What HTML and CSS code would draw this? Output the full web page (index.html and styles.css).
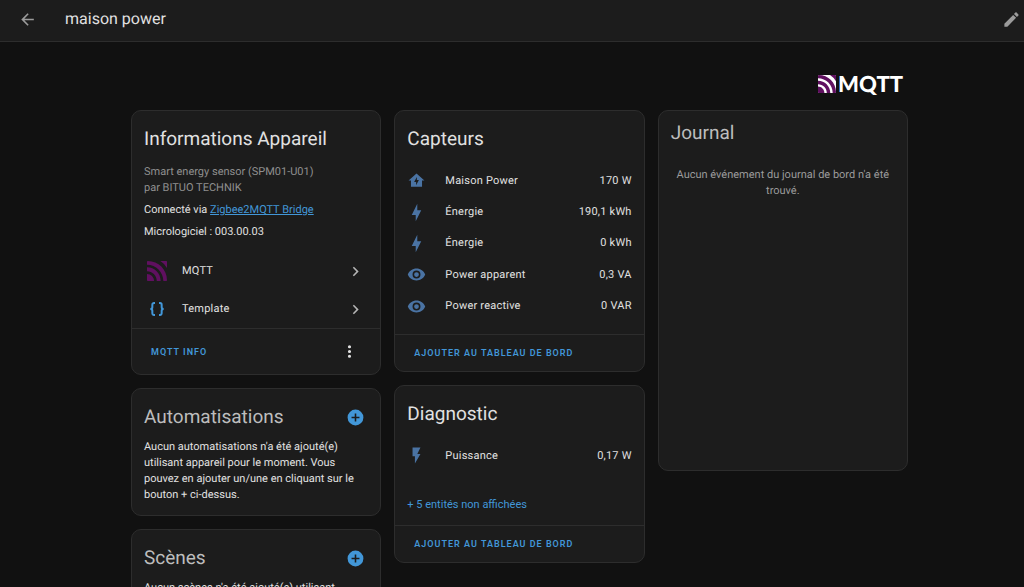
FILE: index.html
```html
<!DOCTYPE html>
<html lang="fr">
<head>
<meta charset="utf-8">
<meta name="viewport" content="width=device-width, initial-scale=1">
<title>maison power</title>
<link rel="stylesheet" href="styles.css">
</head>
<body class="app">
<svg class="sprite" aria-hidden="true">
  <symbol id="i-bolt" viewBox="0 0 24 24"><path d="M11 15H6L13 1V9H18L11 23V15Z"/></symbol>
  <symbol id="i-eye" viewBox="0 0 24 24"><path d="M12,9A3,3 0 0,0 9,12A3,3 0 0,0 12,15A3,3 0 0,0 15,12A3,3 0 0,0 12,9M12,17A5,5 0 0,1 7,12A5,5 0 0,1 12,7A5,5 0 0,1 17,12A5,5 0 0,1 12,17M12,4.5C7,4.5 2.73,7.61 1,12C2.73,16.39 7,19.5 12,19.5C17,19.5 21.27,16.39 23,12C21.27,7.61 17,4.5 12,4.5Z"/></symbol>
  <symbol id="i-chevron" viewBox="0 0 24 24"><path d="M8.59,16.58L13.17,12L8.59,7.41L10,6L16,12L10,18L8.59,16.58Z"/></symbol>
  <symbol id="i-plus" viewBox="0 0 24 24"><path d="M17,13H13V17H11V13H7V11H11V7H13V11H17M12,2A10,10 0 0,0 2,12A10,10 0 0,0 12,22A10,10 0 0,0 22,12A10,10 0 0,0 12,2Z"/></symbol>
  <symbol id="i-waves" viewBox="0 0 18 18"><path d="M0 11.6C3.500 11.600 6.400 14.500 6.400 18H0.700Q0 18 0 17.300ZM0 5.700C6.800 5.700 12.300 11.200 12.300 18H8.800C8.800 13.100 4.900 9.200 0 9.200ZM0 .7Q0 0 .7 0C10.300 0 18 7.700 18 17.300Q18 18 17.300 18H14.700C14.700 9.900 8.100 3.300 0 3.300ZM12 0H17.300Q18 0 18 .7V6.200Q15.600 2.300 12 0Z"/></symbol>
</svg>

<header class="topbar">
  <button class="icon-button" type="button" aria-label="Retour"><svg class="icon" viewBox="0 0 24 24"><path d="M20,11V13H8L13.500,18.500L12.080,19.920L4.160,12L12.080,4.080L13.500,5.500L8,11H20Z"/></svg></button>
  <h1 class="topbar-title">maison power</h1>
  <button class="icon-button" type="button" aria-label="Modifier"><svg class="icon" viewBox="0 0 24 24"><path d="M20.710,7.040C21.100,6.650 21.100,6 20.710,5.630L18.370,3.290C18,2.900 17.350,2.900 16.960,3.290L15.120,5.120L18.870,8.870M3,17.250V21H6.750L17.810,9.930L14.060,6.180L3,17.250Z"/></svg></button>
</header>

<main class="content">
  <div class="page">
    <div class="brand"><svg class="brand-mark" viewBox="0 0 18 18" aria-hidden="true"><rect class="brand-gaps" width="18" height="18" rx="1"/><use href="#i-waves"/></svg><span>MQTT</span></div>
    <div class="columns">
      <div class="column">
        <section class="card">
          <div class="card-body">
            <h2 class="card-title">Informations Appareil</h2>
            <div class="device">
              <p class="muted">Smart energy sensor (SPM01-U01)<br>par BITUO TECHNIK</p>
              <p>Connecté via <a class="link" href="#bridge">Zigbee2MQTT Bridge</a></p>
              <p>Micrologiciel : 003.00.03</p>
            </div>
          </div>
          <nav class="integrations">
            <a class="integration" href="#mqtt"><svg class="logo logo-mqtt" aria-hidden="true"><use href="#i-waves"/></svg><span class="grow">MQTT</span><svg class="icon"><use href="#i-chevron"/></svg></a>
            <a class="integration" href="#template"><svg class="logo logo-template" viewBox="0 0 24 24" aria-hidden="true"><path d="M9 3H7.500A2.500 2.500 0 0 0 5 5.500V9.500Q5 12 2 12Q5 12 5 14.500V18.500A2.500 2.500 0 0 0 7.500 21H9M15 3H16.500A2.500 2.500 0 0 1 19 5.500V9.500Q19 12 22 12Q19 12 19 14.500V18.500A2.500 2.500 0 0 1 16.500 21H15"/></svg><span class="grow">Template</span><svg class="icon"><use href="#i-chevron"/></svg></a>
          </nav>
          <footer class="card-actions card-actions-tall">
            <button class="action" type="button">MQTT INFO</button>
            <button class="icon-button menu" type="button" aria-label="Menu"><svg class="icon" viewBox="0 0 24 24"><path d="M12,16A2,2 0 0,1 14,18A2,2 0 0,1 12,20A2,2 0 0,1 10,18A2,2 0 0,1 12,16M12,10A2,2 0 0,1 14,12A2,2 0 0,1 12,14A2,2 0 0,1 10,12A2,2 0 0,1 12,10M12,4A2,2 0 0,1 14,6A2,2 0 0,1 12,8A2,2 0 0,1 10,6A2,2 0 0,1 12,4Z"/></svg></button>
          </footer>
        </section>
        <section class="card">
          <div class="card-body">
            <div class="card-head"><h2 class="card-title dim">Automatisations</h2><button class="icon-button add" type="button" aria-label="Ajouter une automatisation"><svg class="icon"><use href="#i-plus"/></svg></button></div>
            <p>Aucun automatisations n'a été ajouté(e) utilisant appareil pour le moment. Vous pouvez en ajouter un/une en cliquant sur le bouton + ci-dessus.</p>
          </div>
        </section>
        <section class="card">
          <div class="card-body">
            <div class="card-head"><h2 class="card-title dim">Scènes</h2><button class="icon-button add" type="button" aria-label="Ajouter une scène"><svg class="icon"><use href="#i-plus"/></svg></button></div>
            <p>Aucun scènes n'a été ajouté(e) utilisant appareil pour le moment. Vous pouvez en ajouter un/une en cliquant sur le bouton + ci-dessus.</p>
          </div>
        </section>
      </div>

      <div class="column">
        <section class="card">
          <div class="card-body">
            <h2 class="card-title">Capteurs</h2>
            <ul class="entities entities-five">
              <li class="entity"><svg class="icon" viewBox="0 0 24 24"><path fill-rule="evenodd" d="M12 3L2 12H5V20H19V12H22L12 3M11.500 18V14H9L12.500 7.500V11.500H15L11.500 18Z"/></svg><span class="grow">Maison Power</span><span>170 W</span></li>
              <li class="entity"><svg class="icon"><use href="#i-bolt"/></svg><span class="grow">Énergie</span><span>190,1 kWh</span></li>
              <li class="entity"><svg class="icon"><use href="#i-bolt"/></svg><span class="grow">Énergie</span><span>0 kWh</span></li>
              <li class="entity"><svg class="icon"><use href="#i-eye"/></svg><span class="grow">Power apparent</span><span>0,3 VA</span></li>
              <li class="entity"><svg class="icon"><use href="#i-eye"/></svg><span class="grow">Power reactive</span><span>0 VAR</span></li>
            </ul>
          </div>
          <footer class="card-actions"><button class="action" type="button">AJOUTER AU TABLEAU DE BORD</button></footer>
        </section>
        <section class="card">
          <div class="card-body">
            <h2 class="card-title">Diagnostic</h2>
            <ul class="entities">
              <li class="entity"><svg class="icon" viewBox="0 0 24 24"><path d="M7,2V13H10V22L17,10H13L17,2H7Z"/></svg><span class="grow">Puissance</span><span>0,17 W</span></li>
            </ul>
            <button class="show-more" type="button">+ 5 entités non affichées</button>
          </div>
          <footer class="card-actions"><button class="action" type="button">AJOUTER AU TABLEAU DE BORD</button></footer>
        </section>
      </div>

      <div class="column">
        <section class="card journal">
          <h2 class="card-title dim">Journal</h2>
          <p class="empty">Aucun événement du journal de bord n'a été trouvé.</p>
        </section>
      </div>
    </div>
  </div>
</main>
</body>
</html>
```
FILE: styles.css
```css
* { box-sizing: border-box; }

.app {
  margin: 0;
  height: 100vh;
  display: flex;
  flex-direction: column;
  background: #111;
  color: #e1e1e1;
  font: 11px/16px Roboto, sans-serif;
  text-rendering: geometricPrecision;
}

.sprite { display: none; }
.icon { display: block; width: 19px; height: 19px; fill: currentColor; }
.grow { flex: 1; }
h1, h2, p, ul { margin: 0; padding: 0; }

button {
  padding: 0;
  border: 0;
  background: none;
  color: inherit;
  font: inherit;
  cursor: pointer;
}

.topbar {
  flex: none;
  display: flex;
  align-items: center;
  height: 42px;
  padding: 0 3px 3px 18px;
  background: #1c1c1c;
  border-bottom: 1px solid #2d2d2d;
}
.topbar .icon-button { color: #9b9b9b; }
.topbar-title {
  flex: 1;
  margin-left: 28px;
  font-size: 16px;
  font-weight: 400;
  line-height: 24px;
}

.content {
  flex: 1;
  overflow-y: auto;
  scrollbar-width: none;
  padding: 29px 0 13px 15px;
}
.page { max-width: 777px; margin: 0 auto; }

.brand {
  display: flex;
  justify-content: flex-end;
  align-items: center;
  gap: 2px;
  height: 26px;
  margin-bottom: 13px;
  padding-right: 5px;
  color: #fff;
  font: 900 22px/26px Lato, sans-serif;
}
.brand-mark { width: 18px; height: 18px; fill: #601060; }
.brand-gaps { fill: #fff; }

.columns {
  display: grid;
  grid-template-columns: repeat(3, minmax(0, 1fr));
  align-items: start;
  gap: 13px;
}
.column { display: flex; flex-direction: column; gap: 13px; }

.card {
  background: #1c1c1c;
  border: 1px solid #2d2d2d;
  border-radius: 10px;
}
.card-body { padding: 12px; }
.card-head {
  display: flex;
  align-items: center;
  justify-content: space-between;
  margin-bottom: 6px;
  padding-right: 3px;
}
.card-title {
  font-size: 19px;
  font-weight: 400;
  line-height: 32px;
}
.dim { color: #bdbdbd; }
.muted { color: #8f8f8f; }

.device { display: grid; gap: 6px; margin-top: 9px; }
.link { color: #4297d8; }

.integrations { display: grid; }
.integration {
  display: flex;
  align-items: center;
  gap: 15px;
  height: 38px;
  padding: 0 15px;
  color: inherit;
  letter-spacing: 0.02em;
  text-decoration: none;
}
.integration .icon { color: #b5b5b5; }
.logo { width: 20px; height: 20px; }
.logo-mqtt { fill: #601060; }
.logo-template { padding: 2px; fill: none; stroke: #4297d8; stroke-width: 3; }

.card-actions {
  display: flex;
  align-items: center;
  justify-content: space-between;
  height: 37px;
  padding: 0 21px 0 19px;
  border-top: 1px solid #2d2d2d;
}
.card-actions-tall { height: 46px; }
.action {
  color: #4297d8;
  font-size: 9px;
  font-weight: 600;
  letter-spacing: 1px;
}

.add { color: #4297d8; }

.entities { display: grid; grid-auto-rows: 1fr; margin-top: 10px; letter-spacing: 0.02em; list-style: none; }
.entities-five { min-height: 157px; }
.entity { display: flex; align-items: center; min-height: 31px; }
.entity .icon { margin-right: 19px; color: #4a73a3; }
.show-more { display: block; margin-top: 26px; color: #4297d8; }

.journal { min-height: 361px; padding: 6px 12px; }
.empty { margin-top: 18px; color: #9b9b9b; text-align: center; }
```
